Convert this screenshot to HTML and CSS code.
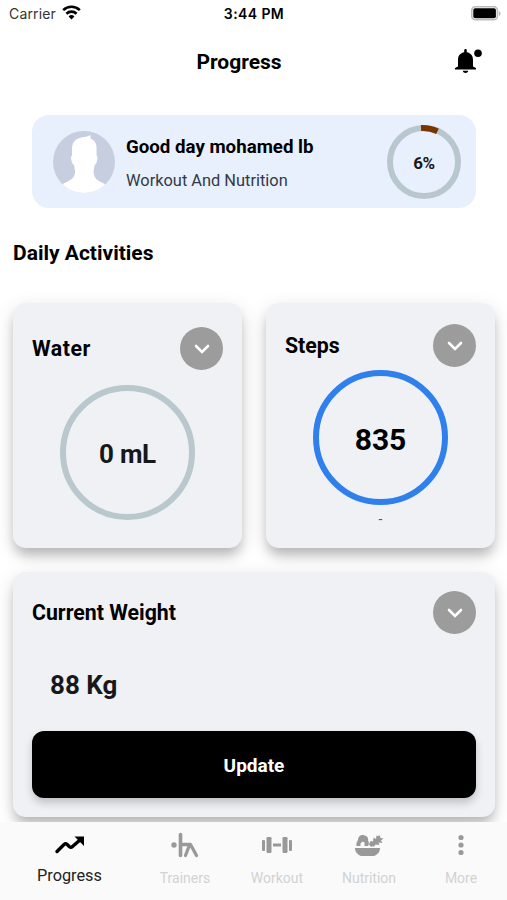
FILE: index.html
```html
<!DOCTYPE html>
<html lang="en">
<head>
    <meta charset="UTF-8">
    <meta name="viewport" content="width=device-width, initial-scale=1.0">
    <title>Progress</title>
    <link rel="stylesheet" href="styles.css">
</head>
<body>
    <div class="app">
        <div class="status-bar">
            <div class="carrier">
                <span>Carrier</span>
                <svg width="19" height="15" viewBox="0 0 19 15">
                    <g fill="none" stroke="#000" stroke-width="2.6">
                        <path d="M1.2 5.1a12 12 0 0 1 16.6 0"/>
                        <path d="M4.4 8.7a7.4 7.4 0 0 1 10.2 0"/>
                    </g>
                    <path d="M9.5 14.4 6.6 11.4a4.2 4.2 0 0 1 5.8 0z"/>
                </svg>
            </div>
            <span class="time">3:44 PM</span>
            <svg class="battery" width="30" height="15" viewBox="0 0 30 15">
                <rect x=".8" y=".8" width="25.600" height="13" rx="3.500" fill="#fff" stroke="#bbb" stroke-width="1.600"/>
                <rect x="2.300" y="2.300" width="22.600" height="10" rx="1.800"/>
                <path d="M27.800 5c2.400.7 2.400 4.300 0 5z" fill="#bbb"/>
            </svg>
        </div>

        <div class="header">
            <h1>Progress</h1>
            <svg class="bell" width="28" height="26" viewBox="0 0 28 26">
                <path d="M10.500 0c.9 0 1.300.7 1.300 1.500v1.800c4 .7 6.200 3.500 6.200 7.700v6.500l3 1.500v1.500H0V19l3-1.500V11c0-4.200 2.200-7 6.200-7.700V1.500C9.200.7 9.600 0 10.500 0z"/>
                <path d="M7.800 21.800h5.400c-.4 3-5 3-5.400 0z"/>
                <circle cx="23" cy="4.200" r="3.800"/>
            </svg>
        </div>

        <div class="greeting">
            <svg class="avatar" width="62" height="62" viewBox="0 0 62 62">
                <defs>
                    <clipPath id="avatar-clip"><circle cx="31" cy="31" r="31"/></clipPath>
                </defs>
                <g clip-path="url(#avatar-clip)">
                    <rect width="62" height="62" fill="#c6cee0"/>
                    <path fill="#fff" d="M37 4c-2 1.500-4 1.500-6 2-8 1-12 4.500-12 12v7c-1.500 0-1.300 3 .3 7 .8 1.500 1.500 1.500 1.800 2.500l1 6c-.3 7-4 8.500-13.600 13L5 63h52l-4-9.500c-9-4-12-6-12.500-13l1-6c.3-1 1-1 1.800-2.500 1.500-4 1.500-7 .3-7l-.1-9c0-4-2.500-7-6-8.500.5-1 0-2.500-.5-3.500z"/>
                </g>
            </svg>
            <div class="greeting-text">
                <h2>Good day mohamed lb</h2>
                <p>Workout And Nutrition</p>
            </div>
            <div class="goal">
                <svg width="74" height="74" viewBox="0 0 74 74">
                    <circle cx="37" cy="37" r="34" fill="none" stroke="#b8c7ce" stroke-width="6"/>
                    <path d="M34 3.100a34 34 0 0 1 16.500 3.300" fill="none" stroke="#783500" stroke-width="6"/>
                </svg>
                <span>6%</span>
            </div>
        </div>

        <h2 class="section-title">Daily Activities</h2>

        <div class="activities">
            <div class="card water">
                <div class="card-head">
                    <h3>Water</h3>
                    <button class="toggle">
                        <svg width="16" height="10" viewBox="0 0 16 10"><path d="M2 2l6 6 6-6"/></svg>
                    </button>
                </div>
                <div class="ring">0 mL</div>
            </div>
            <div class="card steps">
                <div class="card-head">
                    <h3>Steps</h3>
                    <button class="toggle">
                        <svg width="16" height="10" viewBox="0 0 16 10"><path d="M2 2l6 6 6-6"/></svg>
                    </button>
                </div>
                <div class="ring">835</div>
                <p class="note">-</p>
            </div>
            <div class="card weight">
                <div class="card-head">
                    <h3>Current Weight</h3>
                    <button class="toggle">
                        <svg width="16" height="10" viewBox="0 0 16 10"><path d="M2 2l6 6 6-6"/></svg>
                    </button>
                </div>
                <p class="weight-value">88 Kg</p>
                <button class="update">Update</button>
            </div>
        </div>

        <div class="tab-bar">
            <a class="tab active">
                <svg width="32" height="28" viewBox="0 0 32 28">
                    <path d="M3 20.500l7-7c1.200-1 2-1 3.200 0l2 2c1.200 1 2.200 1 3.300 0L26 9" fill="none" stroke="#000" stroke-width="3.400" stroke-linecap="round"/>
                    <path d="M20.500 5.500h9.500V15z"/>
                </svg>
                <span>Progress</span>
            </a>
            <a class="tab">
                <svg width="32" height="28" viewBox="0 0 32 28">
                    <circle cx="5" cy="14" r="2.700" fill="#999"/>
                    <path d="M11.500 3.500v21" fill="none" stroke="#999" stroke-width="3.600" stroke-linecap="round"/>
                    <path d="M12 13.500h9.500l6 11M20.500 14l-4 10.500" fill="none" stroke="#999" stroke-width="3.300" stroke-linecap="round" stroke-linejoin="round"/>
                </svg>
                <span>Trainers</span>
            </a>
            <a class="tab">
                <svg width="32" height="28" viewBox="0 0 32 28" fill="#999">
                    <rect x="1" y="9" width="3" height="11" rx="1"/>
                    <rect x="5.500" y="6" width="5" height="16" rx="1.200"/>
                    <rect x="12" y="12.500" width="8" height="3"/>
                    <rect x="21.500" y="6" width="5" height="16" rx="1.200"/>
                    <rect x="28" y="9" width="3" height="11" rx="1"/>
                </svg>
                <span>Workout</span>
            </a>
            <a class="tab">
                <svg width="32" height="28" viewBox="0 0 32 28" fill="#999">
                    <path d="M2 17h25c0 4-2.500 6.500-6 8H8C4.500 23.500 2 21 2 17z"/>
                    <path d="M3.500 15C3 12 4 10.500 5 9c0-4 4-6 6.500-4.500C15 5 15.500 8 15 9.500c1.500 2 1 4 0 5.500h-3.500v-3.500l-2-1-2 2V15z"/>
                    <path d="M16 13.500l1.500-3.500 2.500.5.500-4 2.500 1.500.5-3.500 2 1V4l1.500 1 .5 2 3 .5-2.500 2 1.500 2.500-4-.5 1 2.500-4-.5L21 15.500h-3.500z"/>
                </svg>
                <span>Nutrition</span>
            </a>
            <a class="tab">
                <svg width="32" height="28" viewBox="0 0 32 28" fill="#999">
                    <circle cx="16" cy="6.500" r="2.600"/>
                    <circle cx="16" cy="14" r="2.600"/>
                    <circle cx="16" cy="21.500" r="2.600"/>
                </svg>
                <span>More</span>
            </a>
        </div>
    </div>
</body>
</html>
```

FILE: styles.css
```css
* {
    margin: 0;
    padding: 0;
    box-sizing: border-box;
}

body {
    font-family: Roboto, "Liberation Sans", sans-serif;
    background-color: #fff;
    color: #000;
}

svg {
    display: block;
}

.app {
    width: 507px;
    height: 900px;
    display: flex;
    flex-direction: column;
    overflow: hidden;
}

.status-bar {
    height: 28px;
    flex-shrink: 0;
    padding: 0 6px 0 9px;
    display: grid;
    grid-template-columns: 1fr auto 1fr;
    align-items: center;
    font-family: Inter, sans-serif;
    font-size: 14px;
}

.carrier {
    display: flex;
    align-items: center;
    gap: 6px;
    color: #333;
    letter-spacing: 0.15px;
}

.carrier span {
    margin-top: -2px;
}

.carrier svg {
    margin-top: -3px;
}

.time {
    margin: -1px 2px 0 0;
    font-weight: 600;
    font-size: 14px;
    letter-spacing: 0.4px;
}

.battery {
    justify-self: end;
    margin-top: -2px;
}

.header {
    height: 68px;
    flex-shrink: 0;
    padding: 0 24px;
    display: grid;
    grid-template-columns: 1fr auto 1fr;
    align-items: center;
}

.header h1 {
    grid-column: 2;
    margin-left: -29px;
    font-size: 21px;
    line-height: 28px;
}

.bell {
    justify-self: end;
}

.greeting {
    height: 93px;
    flex-shrink: 0;
    margin: 19px 31px 0 32px;
    padding: 0 15px 0 21px;
    display: flex;
    align-items: center;
    background-color: #e8f0fd;
    border-radius: 17px;
}

.greeting-text {
    flex: 1;
    margin-left: 11px;
    padding-top: 5px;
}

.greeting-text h2 {
    font-size: 18.7px;
    line-height: 28px;
    white-space: nowrap;
}

.greeting-text p {
    margin-top: 6px;
    font-size: 16.4px;
    line-height: 28px;
    color: #333a45;
}

.goal {
    display: grid;
    place-items: center;
}

.goal svg,
.goal span {
    grid-area: 1 / 1;
}

.goal span {
    padding-top: 2px;
    font-size: 17px;
    letter-spacing: -0.5px;
    font-weight: bold;
    color: #16191d;
}

.section-title {
    flex-shrink: 0;
    margin: 30px 0 0 13px;
    font-size: 21px;
    line-height: 30px;
}

.activities {
    flex: 1;
    min-height: 0;
    margin-top: 35px;
    padding: 0 12px 0 13px;
    display: grid;
    grid-template-columns: 229px 229px;
    grid-template-rows: 245px 245px;
    gap: 24px;
}

.card {
    padding: 24px 19px 0 19px;
    background-color: #eff1f5;
    border-radius: 13px;
    box-shadow: 0 9px 12px -2px rgba(0, 0, 0, 0.22), 0 5px 20px rgba(0, 0, 0, 0.12);
}

.card-head {
    display: flex;
    justify-content: space-between;
    align-items: center;
}

.card h3 {
    font-size: 21.3px;
    line-height: 30px;
}

.water h3 {
    letter-spacing: 0.5px;
}

.toggle {
    width: 43px;
    height: 43px;
    display: flex;
    justify-content: center;
    align-items: center;
    background-color: #9c9c9c;
    border: none;
    border-radius: 50%;
}

.toggle path {
    fill: none;
    stroke: #fff;
    stroke-width: 2.6;
    stroke-linecap: round;
}

.ring {
    width: 135px;
    height: 135px;
    margin: 15px auto 0;
    display: flex;
    justify-content: center;
    align-items: center;
    border: 6px solid #b8c8cc;
    border-radius: 50%;
    font-size: 26px;
    font-weight: bold;
    color: #16181b;
}

.water .ring {
    letter-spacing: -0.3px;
    padding-top: 2px;
}

.steps {
    padding-top: 21px;
}

.steps .ring {
    margin-top: 3px;
    padding-top: 4px;
    border-color: #2f80ed;
    font-size: 30px;
    color: #000;
}

.note {
    font-size: 14px;
    line-height: 28px;
    text-align: center;
    color: #555;
}

.weight {
    grid-column: 1 / 3;
    padding-top: 19px;
}

.weight-value {
    margin: 34px 0 0 18px;
    font-size: 26px;
    line-height: 34px;
    font-weight: bold;
    color: #16181b;
}

.update {
    width: 100%;
    height: 67px;
    margin-top: 29px;
    padding-top: 2px;
    background-color: #000;
    border: none;
    border-radius: 12px;
    box-shadow: 0 5px 9px rgba(0, 0, 0, 0.2);
    color: #fff;
    font-family: inherit;
    font-size: 19px;
    font-weight: bold;
}

.tab-bar {
    position: relative;
    height: 78px;
    flex-shrink: 0;
    padding-top: 9px;
    display: flex;
    background-color: #fafafa;
}

.tab {
    width: 92px;
    flex-shrink: 0;
    display: flex;
    flex-direction: column;
    align-items: center;
    font-size: 14px;
    line-height: 24px;
    color: #d2d2d2;
}

.tab span {
    margin-top: 7px;
}

.tab.active {
    width: 139px;
    font-size: 16.3px;
    color: #222;
}

.tab.active span {
    margin-top: 5px;
}
```
